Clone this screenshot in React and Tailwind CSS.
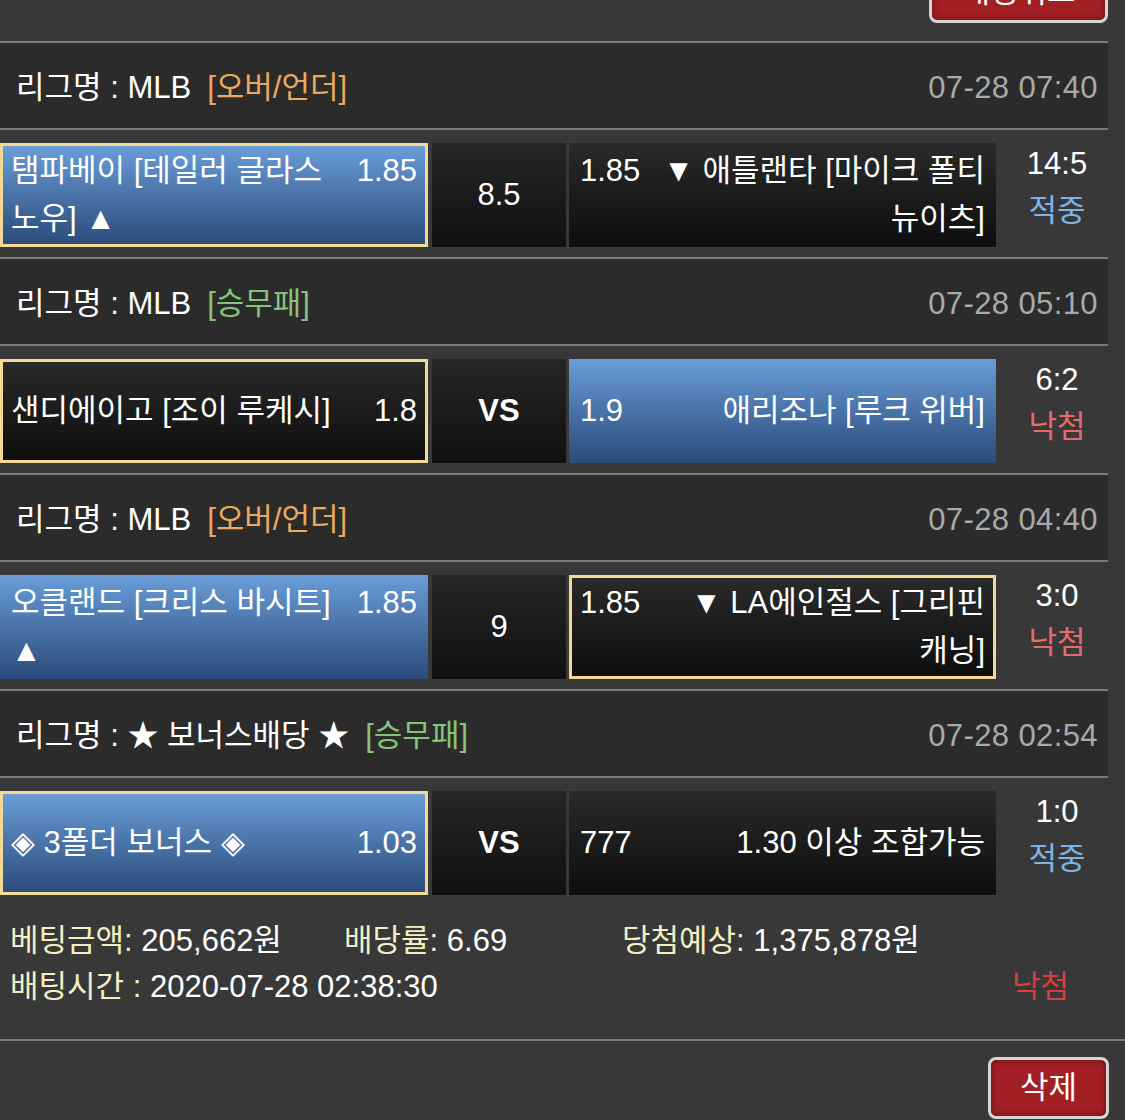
import React from "react";

const bets = [
  {
    league: "MLB",
    type: "[오버/언더]",
    typeColor: "text-[#eca85c]",
    time: "07-28 07:40",
    home: { name: "탬파베이 [테일러 글라스노우] ▲", odds: "1.85", blue: true, picked: true },
    mid: "8.5",
    away: { name: "▼ 애틀랜타 [마이크 폴티뉴이츠]", odds: "1.85" },
    score: "14:5",
    win: true,
  },
  {
    league: "MLB",
    type: "[승무패]",
    typeColor: "text-[#84c476]",
    time: "07-28 05:10",
    home: { name: "샌디에이고 [조이 루케시]", odds: "1.8", picked: true },
    mid: "VS",
    away: { name: "애리조나 [루크 위버]", odds: "1.9", blue: true },
    score: "6:2",
    win: false,
  },
  {
    league: "MLB",
    type: "[오버/언더]",
    typeColor: "text-[#eca85c]",
    time: "07-28 04:40",
    home: { name: "오클랜드 [크리스 바시트] ▲", odds: "1.85", blue: true },
    mid: "9",
    away: { name: "▼ LA에인절스 [그리핀 캐닝]", odds: "1.85", picked: true },
    score: "3:0",
    win: false,
  },
  {
    league: "★ 보너스배당 ★",
    type: "[승무패]",
    typeColor: "text-[#84c476]",
    time: "07-28 02:54",
    home: { name: "◈ 3폴더 보너스 ◈", odds: "1.03", blue: true, picked: true },
    mid: "VS",
    away: { name: "1.30 이상 조합가능", odds: "777" },
    score: "1:0",
    win: true,
  },
];

function TeamCell({ team, right }) {
  const bg = team.blue
    ? "bg-linear-to-b from-[#6a9dd9] to-[#2b4c7a]"
    : "bg-linear-to-b from-[#2a2a2a] to-[#0e0e0e]";
  const frame = team.picked ? "border-[3px] border-[#f2da94] px-[8px]" : "px-[11px]";

  return (
    <div className={`flex items-center h-[104px] ${right ? "w-[427px]" : "w-[428px]"} ${bg} ${frame}`}>
      <div className={`w-full leading-[48px] ${right ? "text-right" : "text-left"}`}>
        <span className={right ? "float-left pr-[20px]" : "float-right pl-[20px]"}>{team.odds}</span>
        {team.name}
      </div>
    </div>
  );
}

function BetBlock({ bet }) {
  return (
    <div>
      <div className="h-[2px] bg-[#7a7a7a]" />
      <div className="flex items-center justify-between h-[85px] bg-[#2b2b2b] pl-[16px] pr-[10px] pt-[6px]">
        <div className="flex items-center gap-[16px]">
          <span>리그명 : {bet.league}</span>
          <span className={bet.typeColor}>{bet.type}</span>
        </div>
        <span className="text-[#a9a9a9] tracking-[0.4px]">{bet.time}</span>
      </div>
      <div className="h-[2px] bg-[#7a7a7a]" />
      <div className="flex pt-[13px] pb-[10px]">
        <TeamCell team={bet.home} />
        <div className="ml-[4px] mr-[3px] flex w-[134px] h-[104px] items-center justify-center bg-linear-to-b from-[#262626] to-[#111111]">
          <span className={bet.mid === "VS" ? "font-bold" : ""}>{bet.mid}</span>
        </div>
        <TeamCell team={bet.away} right />
        <div className="flex w-[112px] flex-col items-center pl-[10px] leading-[47px] -mt-[3px]">
          <span>{bet.score}</span>
          <span className={bet.win ? "text-[#7fb3e6]" : "text-[#e36b6b]"}>{bet.win ? "적중" : "낙첨"}</span>
        </div>
      </div>
    </div>
  );
}

function RedButton({ children, className }) {
  return (
    <button
      className={`h-[62px] rounded-[8px] border-[3px] border-[#d4d4d4] bg-[#a21f24] text-white shadow-[inset_0_0_6px_rgba(0,0,0,0.45)] ${className}`}
    >
      {children}
    </button>
  );
}

export default function App() {
  return (
    <div className="min-h-[1120px] bg-[#383838] text-white text-[31px] font-['Liberation_Sans','Noto_Sans_CJK_KR',sans-serif]">
      {/* top cancel button, cut off by the viewport */}
      <div className="flex h-[41px] w-[1108px] items-end justify-end">
        <RedButton className="mb-[18px] w-[179px]">배팅취소</RedButton>
      </div>

      <div className="w-[1108px]">
        {bets.map((bet, i) => (
          <BetBlock key={i} bet={bet} />
        ))}
      </div>

      {/* summary */}
      <div className="pl-[10px] pt-[13px] pb-[29px]">
        <div className="flex leading-[46px]">
          <div className="w-[334px]">
            <span className="text-[#f3efc2]">베팅금액:</span> 205,662원
          </div>
          <div className="w-[278px]">
            <span className="text-[#f3efc2]">배당률:</span> 6.69
          </div>
          <div>
            <span className="text-[#f3efc2]">당첨예상:</span> 1,375,878원
          </div>
        </div>
        <div className="flex justify-between pr-[56px] leading-[46px]">
          <div>
            <span className="text-[#f3efc2]">배팅시간 :</span> 2020-07-28 02:38:30
          </div>
          <span className="text-[#d63f3a]">낙첨</span>
        </div>
      </div>
      <div className="h-[2px] bg-[#7a7a7a]" />
      <div className="flex justify-end pr-[16px] pt-[16px]">
        <RedButton className="w-[121px]">삭제</RedButton>
      </div>
    </div>
  );
}
